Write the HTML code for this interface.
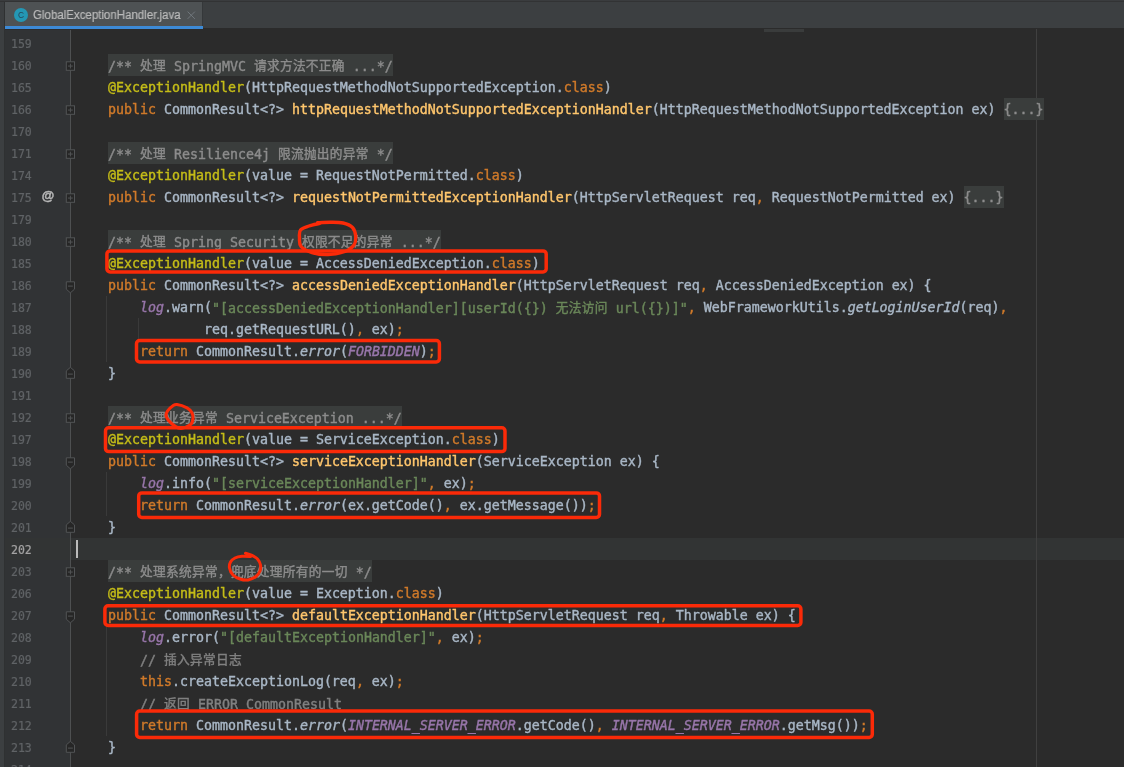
<!DOCTYPE html>
<html lang="zh"><head><meta charset="utf-8"><title>GlobalExceptionHandler.java</title>
<style>
html,body{margin:0;padding:0}
body{width:1124px;height:767px;overflow:hidden;background:#2b2b2b;position:relative;font-family:"Liberation Sans","Noto Sans CJK SC",sans-serif}
#topband{position:absolute;left:0;top:0;width:1124px;height:2px;background:linear-gradient(#3a3c3e 0,#3a3c3e 0.7px,#323334 0.7px,#323334 2px)}
#tabbar{position:absolute;left:0;top:1.9px;width:1124px;height:26.5px;background:#3c3f41}
#lstrip{position:absolute;left:0;top:2px;width:4px;height:765px;background:#3c3f41}
#lline{position:absolute;left:4px;top:2px;width:1px;height:765px;background:#2f3132}
#tab{position:absolute;left:5px;top:1.9px;width:197px;height:24.1px;background:#4e5254}
#tabsep{position:absolute;left:202px;top:1.9px;width:1px;height:24.1px;background:#35383a}
#tabul{position:absolute;left:5px;top:26px;width:198px;height:3.2px;background:#3d8ad6}
#tabicon{position:absolute;left:8.9px;top:5.8px;width:14.6px;height:14.6px;border-radius:7.3px;background:#2497b4}
#tabtxt{position:absolute;left:27.8px;top:1.5px;height:24px;line-height:25px;font-size:12.3px;color:#bbbbbb;white-space:nowrap;will-change:transform;-webkit-text-stroke:0.2px;transform:scaleX(0.935);transform-origin:0 0}
#tabx{position:absolute;left:181px;top:7px}
#gutter{position:absolute;left:5px;top:30.3px;width:65px;height:737px;background:#313335}
#gline{position:absolute;left:69.5px;top:30px;width:1.5px;height:737px;background:#4e5051}
#caretrow{position:absolute;left:5px;top:538px;width:1119px;height:22px;background:#323434}
#margin{position:absolute;left:1035.6px;top:29px;width:1.4px;height:738px;background:#404040}
#scrollhint{position:absolute;left:764px;top:28.6px;width:40px;height:3.4px;background:#3a3c3c}
.ln{position:absolute;left:10.6px;width:40px;height:22px;line-height:22px;will-change:transform;-webkit-text-stroke:0.2px;font-family:"DejaVu Sans Mono", "Liberation Mono", "Noto Sans CJK SC", monospace;font-size:11.5px;color:#606366;white-space:pre}
.ln.cur{color:#a4a3a3}
.cl{position:absolute;left:76px;height:22px;will-change:transform;-webkit-text-stroke:0.4px;line-height:22px;font-family:"DejaVu Sans Mono", "Liberation Mono", "Noto Sans CJK SC", monospace;font-size:13.29px;color:#a9b7c6;white-space:pre}
.cl span{display:inline-block;height:22px;vertical-align:top}
.k{color:#d07a2a}.a{color:#c4bc18}.m{color:#ffc66d}.s{color:#6a8759}.c{color:#808080}
.f{color:#8c8c8c;position:relative}.f::before{content:"";position:absolute;left:0;right:0;top:-1.3px;height:22px;background:#3a3d3c;z-index:-1}
.sf{color:#9876aa;font-style:italic}.sm{font-style:italic}
i.z{position:relative;top:-1.3px;font-style:normal;font-family:"Noto Sans CJK SC","Liberation Sans",sans-serif;font-size:12.7px;letter-spacing:0.3px}
.ig{position:absolute;width:1.1px;background:#3a3a3a}
#caret{position:absolute;left:76px;top:540px;width:2px;height:18px;background:#bbbbbb}
svg{position:absolute;left:0;top:0}
</style></head><body>
<div id="topband"></div><div id="tabbar"></div>
<div id="gutter"></div><div id="caretrow"></div><div id="gline"></div>
<div id="lstrip"></div><div id="lline"></div>
<div id="margin"></div><div id="scrollhint"></div>
<div id="tab"><div id="tabicon"></div><div id="tabtxt">GlobalExceptionHandler.java</div></div><div id="tabsep"></div><div id="tabul"></div>

<div class="ln" style="top:33.0px">159</div>
<div class="ln" style="top:55.0px">160</div>
<div class="cl" style="top:55.3px"><span class="d">    </span><span class="f">/** <i class="z">处理</i> SpringMVC <i class="z">请求方法不正确</i> ...*/</span></div>
<div class="ln" style="top:77.0px">165</div>
<div class="cl" style="top:77.3px"><span class="d">    </span><span class="a">@ExceptionHandler</span><span class="d">(HttpRequestMethodNotSupportedException.</span><span class="k">class</span><span class="d">)</span></div>
<div class="ln" style="top:99.0px">166</div>
<div class="cl" style="top:99.3px"><span class="d">    </span><span class="k">public </span><span class="d">CommonResult&lt;?&gt; </span><span class="m">httpRequestMethodNotSupportedExceptionHandler</span><span class="d">(HttpRequestMethodNotSupportedException ex) </span><span class="f">{...}</span></div>
<div class="ln" style="top:121.0px">170</div>
<div class="ln" style="top:143.0px">171</div>
<div class="cl" style="top:143.3px"><span class="d">    </span><span class="f">/** <i class="z">处理</i> Resilience4j <i class="z">限流抛出的异常</i> */</span></div>
<div class="ln" style="top:165.0px">174</div>
<div class="cl" style="top:165.3px"><span class="d">    </span><span class="a">@ExceptionHandler</span><span class="d">(value = RequestNotPermitted.</span><span class="k">class</span><span class="d">)</span></div>
<div class="ln" style="top:187.0px">175</div>
<div class="cl" style="top:187.3px"><span class="d">    </span><span class="k">public </span><span class="d">CommonResult&lt;?&gt; </span><span class="m">requestNotPermittedExceptionHandler</span><span class="d">(HttpServletRequest req</span><span class="k">,</span><span class="d"> RequestNotPermitted ex) </span><span class="f">{...}</span></div>
<div class="ln" style="top:209.0px">179</div>
<div class="ln" style="top:231.0px">180</div>
<div class="cl" style="top:231.3px"><span class="d">    </span><span class="f">/** <i class="z">处理</i> Spring Security <i class="z">权限不足的异常</i> ...*/</span></div>
<div class="ln" style="top:253.0px">185</div>
<div class="cl" style="top:253.3px"><span class="d">    </span><span class="a">@ExceptionHandler</span><span class="d">(value = AccessDeniedException.</span><span class="k">class</span><span class="d">)</span></div>
<div class="ln" style="top:275.0px">186</div>
<div class="cl" style="top:275.3px"><span class="d">    </span><span class="k">public </span><span class="d">CommonResult&lt;?&gt; </span><span class="m">accessDeniedExceptionHandler</span><span class="d">(HttpServletRequest req</span><span class="k">,</span><span class="d"> AccessDeniedException ex) {</span></div>
<div class="ln" style="top:297.0px">187</div>
<div class="cl" style="top:297.3px"><span class="d">        </span><span class="sf">log</span><span class="d">.warn(</span><span class="s">"[accessDeniedExceptionHandler][userId({}) <i class="z">无法访问</i> url({})]"</span><span class="k">,</span><span class="d"> WebFrameworkUtils.</span><span class="sm">getLoginUserId</span><span class="d">(req)</span><span class="k">,</span></div>
<div class="ln" style="top:319.0px">188</div>
<div class="cl" style="top:319.3px"><span class="d">                req.getRequestURL()</span><span class="k">,</span><span class="d"> ex)</span><span class="k">;</span></div>
<div class="ln" style="top:341.0px">189</div>
<div class="cl" style="top:341.3px"><span class="d">        </span><span class="k">return </span><span class="d">CommonResult.</span><span class="sm">error</span><span class="d">(</span><span class="sf">FORBIDDEN</span><span class="d">)</span><span class="k">;</span></div>
<div class="ln" style="top:363.0px">190</div>
<div class="cl" style="top:363.3px"><span class="d">    }</span></div>
<div class="ln" style="top:385.0px">191</div>
<div class="ln" style="top:407.0px">192</div>
<div class="cl" style="top:407.3px"><span class="d">    </span><span class="f">/** <i class="z">处理业务异常</i> ServiceException ...*/</span></div>
<div class="ln" style="top:429.0px">197</div>
<div class="cl" style="top:429.3px"><span class="d">    </span><span class="a">@ExceptionHandler</span><span class="d">(value = ServiceException.</span><span class="k">class</span><span class="d">)</span></div>
<div class="ln" style="top:451.0px">198</div>
<div class="cl" style="top:451.3px"><span class="d">    </span><span class="k">public </span><span class="d">CommonResult&lt;?&gt; </span><span class="m">serviceExceptionHandler</span><span class="d">(ServiceException ex) {</span></div>
<div class="ln" style="top:473.0px">199</div>
<div class="cl" style="top:473.3px"><span class="d">        </span><span class="sf">log</span><span class="d">.info(</span><span class="s">"[serviceExceptionHandler]"</span><span class="k">,</span><span class="d"> ex)</span><span class="k">;</span></div>
<div class="ln" style="top:495.0px">200</div>
<div class="cl" style="top:495.3px"><span class="d">        </span><span class="k">return </span><span class="d">CommonResult.</span><span class="sm">error</span><span class="d">(ex.getCode()</span><span class="k">,</span><span class="d"> ex.getMessage())</span><span class="k">;</span></div>
<div class="ln" style="top:517.0px">201</div>
<div class="cl" style="top:517.3px"><span class="d">    }</span></div>
<div class="ln cur" style="top:539.0px">202</div>
<div class="ln" style="top:561.0px">203</div>
<div class="cl" style="top:561.3px"><span class="d">    </span><span class="f">/** <i class="z">处理系统异常，兜底处理所有的一切</i> */</span></div>
<div class="ln" style="top:583.0px">206</div>
<div class="cl" style="top:583.3px"><span class="d">    </span><span class="a">@ExceptionHandler</span><span class="d">(value = Exception.</span><span class="k">class</span><span class="d">)</span></div>
<div class="ln" style="top:605.0px">207</div>
<div class="cl" style="top:605.3px"><span class="d">    </span><span class="k">public </span><span class="d">CommonResult&lt;?&gt; </span><span class="m">defaultExceptionHandler</span><span class="d">(HttpServletRequest req</span><span class="k">,</span><span class="d"> Throwable ex) {</span></div>
<div class="ln" style="top:627.0px">208</div>
<div class="cl" style="top:627.3px"><span class="d">        </span><span class="sf">log</span><span class="d">.error(</span><span class="s">"[defaultExceptionHandler]"</span><span class="k">,</span><span class="d"> ex)</span><span class="k">;</span></div>
<div class="ln" style="top:649.0px">209</div>
<div class="cl" style="top:649.3px"><span class="d">        </span><span class="c">// <i class="z">插入异常日志</i></span></div>
<div class="ln" style="top:671.0px">210</div>
<div class="cl" style="top:671.3px"><span class="d">        </span><span class="k">this</span><span class="d">.createExceptionLog(req</span><span class="k">,</span><span class="d"> ex)</span><span class="k">;</span></div>
<div class="ln" style="top:693.0px">211</div>
<div class="cl" style="top:693.3px"><span class="d">        </span><span class="c">// <i class="z">返回</i> ERROR CommonResult</span></div>
<div class="ln" style="top:715.0px">212</div>
<div class="cl" style="top:715.3px"><span class="d">        </span><span class="k">return </span><span class="d">CommonResult.</span><span class="sm">error</span><span class="d">(</span><span class="sf">INTERNAL_SERVER_ERROR</span><span class="d">.getCode()</span><span class="k">,</span><span class="d"> </span><span class="sf">INTERNAL_SERVER_ERROR</span><span class="d">.getMsg())</span><span class="k">;</span></div>
<div class="ln" style="top:737.0px">213</div>
<div class="cl" style="top:737.3px"><span class="d">    }</span></div>
<div class="ln" style="top:759.0px">214</div>
<div class="ig" style="left:106.2px;top:296px;height:66px"></div>
<div class="ig" style="left:106.2px;top:472px;height:44px"></div>
<div class="ig" style="left:106.2px;top:626px;height:110px"></div>
<div class="ig" style="left:138.2px;top:318px;height:22px"></div>
<div id="caret"></div>
<svg width="1124" height="767" viewBox="0 0 1124 767">
<text x="21.1" y="18" text-anchor="middle" font-family="Liberation Sans, sans-serif" font-size="8.4" fill="#23465a">C</text>
<path d="M187.6 11.6l7.3 7.3M194.9 11.6l-7.3 7.3" stroke="#737a80" stroke-width="0.9" fill="none"/>
<rect x="66.3" y="61.8" width="8.2" height="8.5" fill="#262626" stroke="#525456" stroke-width="1"/>
<path d="M68 66.05 h4.8 M70.4 63.65 v4.8" fill="none" stroke="#525456" stroke-width="1"/>
<rect x="66.3" y="105.8" width="8.2" height="8.5" fill="#262626" stroke="#525456" stroke-width="1"/>
<path d="M68 110.05 h4.8 M70.4 107.65 v4.8" fill="none" stroke="#525456" stroke-width="1"/>
<rect x="66.3" y="149.8" width="8.2" height="8.5" fill="#262626" stroke="#525456" stroke-width="1"/>
<path d="M68 154.05 h4.8 M70.4 151.65 v4.8" fill="none" stroke="#525456" stroke-width="1"/>
<rect x="66.3" y="193.8" width="8.2" height="8.5" fill="#262626" stroke="#525456" stroke-width="1"/>
<path d="M68 198.05 h4.8 M70.4 195.65 v4.8" fill="none" stroke="#525456" stroke-width="1"/>
<rect x="66.3" y="237.8" width="8.2" height="8.5" fill="#262626" stroke="#525456" stroke-width="1"/>
<path d="M68 242.05 h4.8 M70.4 239.65 v4.8" fill="none" stroke="#525456" stroke-width="1"/>
<rect x="66.3" y="413.8" width="8.2" height="8.5" fill="#262626" stroke="#525456" stroke-width="1"/>
<path d="M68 418.05 h4.8 M70.4 415.65 v4.8" fill="none" stroke="#525456" stroke-width="1"/>
<rect x="66.3" y="567.8" width="8.2" height="8.5" fill="#262626" stroke="#525456" stroke-width="1"/>
<path d="M68 572.05 h4.8 M70.4 569.65 v4.8" fill="none" stroke="#525456" stroke-width="1"/>
<path d="M66.3 281.8 h8.2 v7.4 l-4.1 3.6 l-4.1 -3.6 z" fill="#262626" stroke="#525456" stroke-width="1"/>
<path d="M68 286.1 h4.8" fill="none" stroke="#525456" stroke-width="1"/>
<path d="M66.3 457.8 h8.2 v7.4 l-4.1 3.6 l-4.1 -3.6 z" fill="#262626" stroke="#525456" stroke-width="1"/>
<path d="M68 462.1 h4.8" fill="none" stroke="#525456" stroke-width="1"/>
<path d="M66.3 611.8 h8.2 v7.4 l-4.1 3.6 l-4.1 -3.6 z" fill="#262626" stroke="#525456" stroke-width="1"/>
<path d="M68 616.1 h4.8" fill="none" stroke="#525456" stroke-width="1"/>
<path d="M66.3 378.3 h8.2 v-7.4 l-4.1 -3.6 l-4.1 3.6 z" fill="#262626" stroke="#525456" stroke-width="1"/>
<path d="M68 374.1 h4.8" fill="none" stroke="#525456" stroke-width="1"/>
<path d="M66.3 532.3 h8.2 v-7.4 l-4.1 -3.6 l-4.1 3.6 z" fill="#262626" stroke="#525456" stroke-width="1"/>
<path d="M68 528.1 h4.8" fill="none" stroke="#525456" stroke-width="1"/>
<path d="M66.3 752.3 h8.2 v-7.4 l-4.1 -3.6 l-4.1 3.6 z" fill="#262626" stroke="#525456" stroke-width="1"/>
<path d="M68 748.1 h4.8" fill="none" stroke="#525456" stroke-width="1"/>
<text x="48.1" y="200.4" text-anchor="middle" font-family="Liberation Sans, sans-serif" font-size="12.8" font-weight="bold" fill="#b8b8b8" stroke="#b8b8b8" stroke-width="0.45">@</text>
<rect x="106.9" y="250.9" width="439.3" height="21.1" rx="3.2" fill="none" stroke="#fb2a08" stroke-width="3.5" stroke-linecap="round" stroke-linejoin="round"/>
<rect x="136.5" y="340.6" width="302.9" height="21.4" rx="3.2" fill="none" stroke="#fb2a08" stroke-width="3.5" stroke-linecap="round" stroke-linejoin="round"/>
<rect x="105.5" y="427.8" width="399.5" height="23.8" rx="3.2" fill="none" stroke="#fb2a08" stroke-width="3.5" stroke-linecap="round" stroke-linejoin="round"/>
<rect x="138.7" y="492.9" width="460.8" height="24.5" rx="3.2" fill="none" stroke="#fb2a08" stroke-width="3.5" stroke-linecap="round" stroke-linejoin="round"/>
<rect x="104.9" y="605.7" width="696.0" height="19.8" rx="3.2" fill="none" stroke="#fb2a08" stroke-width="3.5" stroke-linecap="round" stroke-linejoin="round"/>
<rect x="136.6" y="711.1" width="735.7" height="26.3" rx="3.2" fill="none" stroke="#fb2a08" stroke-width="3.5" stroke-linecap="round" stroke-linejoin="round"/>
<path d="M320.0 223.3C318.2 223.8 312.2 224.9 309.0 226.0C305.8 227.1 302.1 228.0 300.5 230.0C298.9 232.0 299.4 235.2 299.5 238.0C299.6 240.8 298.9 244.1 301.0 246.5C303.1 248.9 307.5 251.2 312.0 252.5C316.5 253.8 322.5 254.8 328.0 254.6C333.5 254.4 340.7 253.1 345.0 251.5C349.3 249.9 352.2 247.6 354.0 245.0C355.8 242.4 355.9 238.9 355.7 236.0C355.4 233.1 354.6 229.7 352.5 227.5C350.4 225.3 346.8 223.9 343.0 223.0C339.2 222.1 334.2 222.3 330.0 222.3C325.8 222.3 319.6 222.7 317.5 222.8" fill="none" stroke="#fb2a08" stroke-width="3.4" stroke-linecap="round" stroke-linejoin="round"/>
<path d="M177.0 404.5C179.3 404.8 184.5 406.5 187.0 407.8C189.5 409.1 190.8 410.7 191.8 412.5C192.8 414.3 193.2 416.4 193.0 418.5C192.8 420.6 192.5 423.2 190.3 424.8C188.1 426.4 183.1 428.5 180.0 428.3C176.9 428.1 173.8 425.5 171.5 423.5C169.2 421.5 166.9 418.6 166.2 416.5C165.5 414.4 166.4 412.8 167.5 411.0C168.6 409.2 171.4 406.9 173.0 405.8C174.6 404.7 174.7 404.2 177.0 404.5" fill="none" stroke="#fb2a08" stroke-width="3.1" stroke-linecap="round" stroke-linejoin="round"/>
<path d="M245.5 553.2C246.6 553.6 250.0 554.3 252.0 555.3C254.0 556.3 256.1 557.4 257.5 559.0C258.9 560.6 260.1 563.0 260.5 565.0C260.9 567.0 260.8 569.1 260.0 571.0C259.2 572.9 258.0 575.0 256.0 576.5C254.0 578.0 250.7 579.6 248.0 580.0C245.3 580.4 242.5 579.8 240.0 579.0C237.5 578.2 234.8 576.8 233.0 575.0C231.2 573.2 229.9 570.2 229.5 568.0C229.1 565.8 229.6 563.7 230.5 562.0C231.4 560.3 233.1 559.0 235.0 558.0C236.9 557.0 239.4 556.5 242.0 556.3C244.6 556.1 249.1 556.5 250.5 556.6" fill="none" stroke="#fb2a08" stroke-width="3.0" stroke-linecap="round" stroke-linejoin="round"/>
</svg>
</body></html>
